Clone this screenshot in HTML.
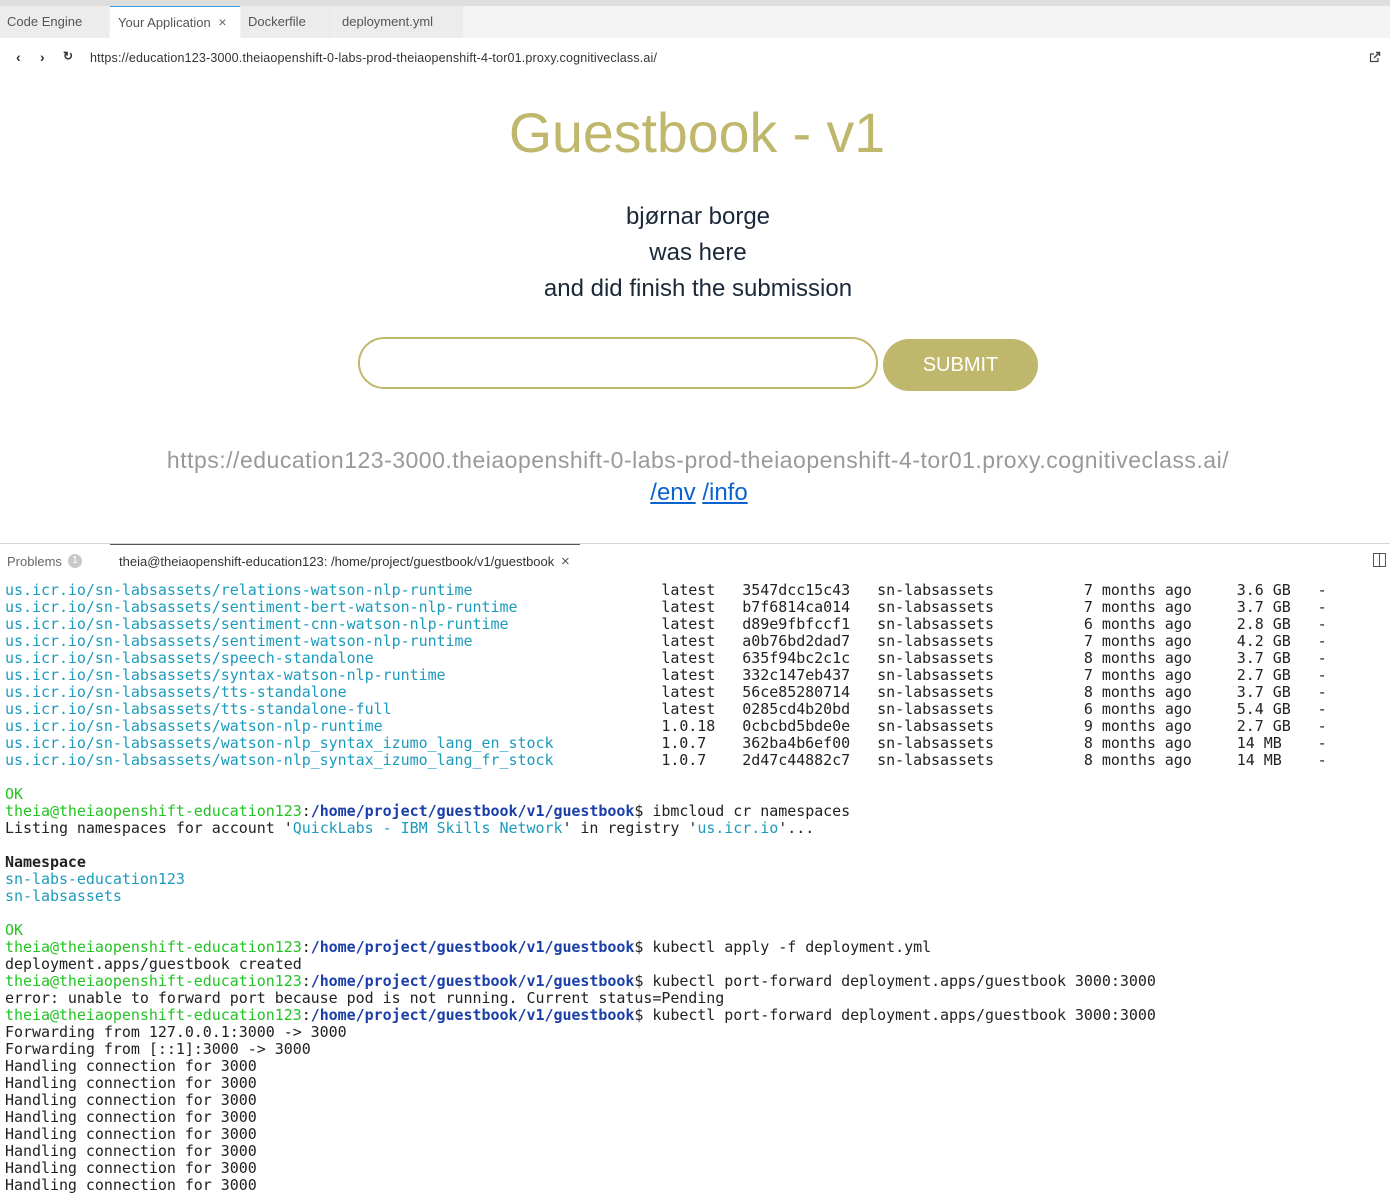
<!DOCTYPE html>
<html><head><meta charset="utf-8"><style>
*{margin:0;padding:0;box-sizing:border-box}
body{width:1390px;height:1194px;overflow:hidden;background:#fff;font-family:"Liberation Sans",sans-serif;position:relative}
.strip{position:absolute;left:0;top:0;width:1390px;height:6px;background:#dedede}
.tabs{position:absolute;left:0;top:6px;width:1390px;height:32px;background:#f3f3f3}
.tab{position:absolute;top:0;height:32px;line-height:32px;font-size:13px;color:#555;padding-left:7px;background:#ececec}
.tab.act{background:#fff;border-top:1px solid #3b9ae1;line-height:30px}
.addr{position:absolute;top:38px;left:0;width:1390px;height:40px;font-size:12.5px;color:#333}
h1{position:absolute;top:101px;left:0;width:1390px;text-align:center;font-weight:normal;font-size:55.5px;color:#bfb86c;padding-left:4px}
.msg{position:absolute;left:0;width:1390px;text-align:center;font-size:24px;color:#1b2838;padding-left:6px}
.inp{position:absolute;left:358px;top:337px;width:520px;height:52px;border:2px solid #c1b86c;border-radius:26px}
.btn{position:absolute;left:883px;top:339px;width:155px;height:52px;background:#bfb86c;border-radius:26px;color:#fff;font-size:20px;text-align:center;line-height:52px}
.url{position:absolute;left:0;top:447px;width:1390px;text-align:center;font-size:23px;color:#999;white-space:nowrap;letter-spacing:0.5px;padding-left:6px}
.links{position:absolute;left:0;top:479px;width:1390px;text-align:center;font-size:24px;padding-left:8px}
.links a{color:#0b63cc;text-decoration:underline}
.panel{position:absolute;left:0;top:543px;width:1390px;height:651px;background:#fff;border-top:1px solid #d6d6d6}
.ph{position:absolute;left:0;top:0;width:1390px;height:34px;font-size:13px;color:#333}
pre{position:absolute;left:5px;top:582px;font-family:"DejaVu Sans Mono",monospace;font-size:15px;line-height:17px;color:#222;letter-spacing:-0.04px}
.c{color:#1d9bbd}.g{color:#22c422}.b{color:#1a3fa8;font-weight:bold}
</style></head><body>
<div class="strip"></div>
<div class="tabs">
<div class="tab" style="left:0;width:109px">Code Engine</div>
<div class="tab act" style="left:110px;width:130px;padding-left:8px">Your Application <span style="color:#666;font-size:14px;margin-left:4px">×</span></div>
<div class="tab" style="left:241px;width:93px">Dockerfile</div>
<div class="tab" style="left:335px;width:128px">deployment.yml</div>
</div>
<div class="addr">
<span style="position:absolute;left:16px;top:11px;font-size:14px;font-weight:bold">‹</span>
<span style="position:absolute;left:40px;top:11px;font-size:14px;font-weight:bold">›</span>
<span style="position:absolute;left:63px;top:11px;font-size:12px;font-weight:bold">↻</span>
<span style="position:absolute;left:90px;top:13px;letter-spacing:0.17px">https://education123-3000.theiaopenshift-0-labs-prod-theiaopenshift-4-tor01.proxy.cognitiveclass.ai/</span>
<svg style="position:absolute;left:1369px;top:13px" width="12" height="12" viewBox="0 0 12 12"><path d="M5 3H1.5V10.5H9V7" fill="none" stroke="#444" stroke-width="1.2"/><path d="M5 7L10.5 1.5M7 1.5H10.5V5" fill="none" stroke="#444" stroke-width="1.4"/></svg>
</div>
<h1>Guestbook - v1</h1>
<div class="msg" style="top:203px">bjørnar borge</div>
<div class="msg" style="top:239px">was here</div>
<div class="msg" style="top:275px">and did finish the submission</div>
<div class="inp"></div>
<div class="btn">SUBMIT</div>
<div class="url">https://education123-3000.theiaopenshift-0-labs-prod-theiaopenshift-4-tor01.proxy.cognitiveclass.ai/</div>
<div class="links"><a>/env</a> <a>/info</a></div>
<div class="panel">
<div class="ph">
<span style="position:absolute;left:7px;top:10px;color:#666">Problems</span>
<span style="position:absolute;left:68px;top:10px;width:14px;height:14px;border-radius:7px;background:#c8c8c8;color:#fff;font-size:10px;text-align:center;line-height:14px">1</span>
<div style="position:absolute;left:110px;top:0;width:470px;height:34px;border-top:1px solid #555"></div>
<span style="position:absolute;left:119px;top:10px">theia@theiaopenshift-education123: /home/project/guestbook/v1/guestbook</span>
<span style="position:absolute;left:561px;top:9px;font-size:15px;color:#555">×</span>
<svg style="position:absolute;left:1373px;top:9px" width="13" height="14"><rect x="0.5" y="0.5" width="12" height="13" fill="none" stroke="#555"/><line x1="6.5" y1="0" x2="6.5" y2="14" stroke="#555"/></svg>
</div>
</div>
<pre><span class="c">us.icr.io/sn-labsassets/relations-watson-nlp-runtime</span>                     latest   3547dcc15c43   sn-labsassets          7 months ago     3.6 GB   -
<span class="c">us.icr.io/sn-labsassets/sentiment-bert-watson-nlp-runtime</span>                latest   b7f6814ca014   sn-labsassets          7 months ago     3.7 GB   -
<span class="c">us.icr.io/sn-labsassets/sentiment-cnn-watson-nlp-runtime</span>                 latest   d89e9fbfccf1   sn-labsassets          6 months ago     2.8 GB   -
<span class="c">us.icr.io/sn-labsassets/sentiment-watson-nlp-runtime</span>                     latest   a0b76bd2dad7   sn-labsassets          7 months ago     4.2 GB   -
<span class="c">us.icr.io/sn-labsassets/speech-standalone</span>                                latest   635f94bc2c1c   sn-labsassets          8 months ago     3.7 GB   -
<span class="c">us.icr.io/sn-labsassets/syntax-watson-nlp-runtime</span>                        latest   332c147eb437   sn-labsassets          7 months ago     2.7 GB   -
<span class="c">us.icr.io/sn-labsassets/tts-standalone</span>                                   latest   56ce85280714   sn-labsassets          8 months ago     3.7 GB   -
<span class="c">us.icr.io/sn-labsassets/tts-standalone-full</span>                              latest   0285cd4b20bd   sn-labsassets          6 months ago     5.4 GB   -
<span class="c">us.icr.io/sn-labsassets/watson-nlp-runtime</span>                               1.0.18   0cbcbd5bde0e   sn-labsassets          9 months ago     2.7 GB   -
<span class="c">us.icr.io/sn-labsassets/watson-nlp_syntax_izumo_lang_en_stock</span>            1.0.7    362ba4b6ef00   sn-labsassets          8 months ago     14 MB    -
<span class="c">us.icr.io/sn-labsassets/watson-nlp_syntax_izumo_lang_fr_stock</span>            1.0.7    2d47c44882c7   sn-labsassets          8 months ago     14 MB    -

<span class="g">OK</span>
<span class="g">theia@theiaopenshift-education123</span>:<span class="b">/home/project/guestbook/v1/guestbook</span>$ ibmcloud cr namespaces
Listing namespaces for account '<span class="c">QuickLabs - IBM Skills Network</span>' in registry '<span class="c">us.icr.io</span>'...

<b>Namespace</b>
<span class="c">sn-labs-education123</span>
<span class="c">sn-labsassets</span>

<span class="g">OK</span>
<span class="g">theia@theiaopenshift-education123</span>:<span class="b">/home/project/guestbook/v1/guestbook</span>$ kubectl apply -f deployment.yml
deployment.apps/guestbook created
<span class="g">theia@theiaopenshift-education123</span>:<span class="b">/home/project/guestbook/v1/guestbook</span>$ kubectl port-forward deployment.apps/guestbook 3000:3000
error: unable to forward port because pod is not running. Current status=Pending
<span class="g">theia@theiaopenshift-education123</span>:<span class="b">/home/project/guestbook/v1/guestbook</span>$ kubectl port-forward deployment.apps/guestbook 3000:3000
Forwarding from 127.0.0.1:3000 -> 3000
Forwarding from [::1]:3000 -> 3000
Handling connection for 3000
Handling connection for 3000
Handling connection for 3000
Handling connection for 3000
Handling connection for 3000
Handling connection for 3000
Handling connection for 3000
Handling connection for 3000</pre>
</body></html>
